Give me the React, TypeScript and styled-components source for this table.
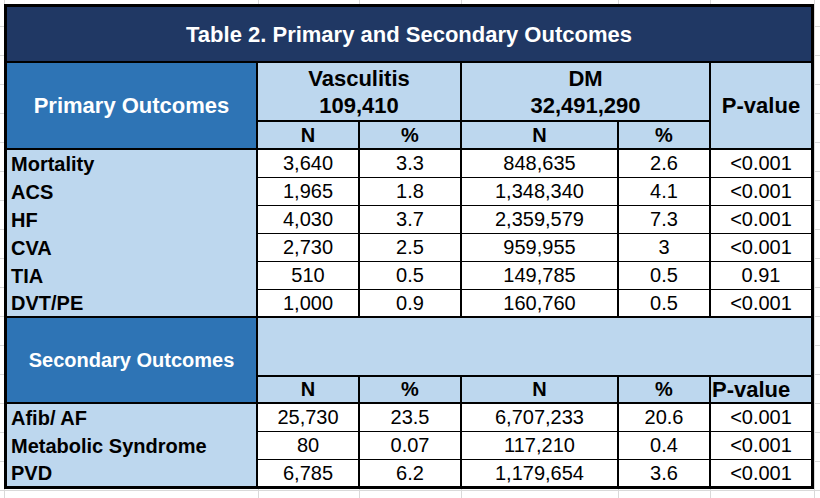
import React from "react";
import styled, { createGlobalStyle } from "styled-components";

const GlobalStyle = createGlobalStyle`
  html, body { margin: 0; padding: 0; background: #ffffff; }
  body { font-family: "Liberation Sans", Arial, Helvetica, sans-serif; }
  *, *::before, *::after { box-sizing: border-box; }
`;

const NAVY = "#203864";
const MID = "#2e74b5";
const LIGHT = "#bdd7ee";
const LINE = "#000000";
const GRID = "#d9d9d9";

const gridXs = [4, 258, 359, 461, 618, 710, 814];
const gridLayers = gridXs.map(() => `linear-gradient(${GRID}, ${GRID})`).join(", ");
const gridPos = gridXs.map((x) => `${x}px 0`).join(", ");
const gridSize = gridXs.map(() => "1px 100%").join(", ");
const gridRepeat = gridXs.map(() => "no-repeat").join(", ");

const Sheet = styled.div`
  width: 820px;
  height: 498px;
  padding: 4px 0 0 4px;
  overflow: hidden;
  background-color: #ffffff;
  background-image: ${gridLayers},
    repeating-linear-gradient(to bottom, transparent 0 28px, ${GRID} 28px 29px);
  background-position: ${gridPos}, 0 -2px;
  background-size: ${gridSize}, 100% 29px;
  background-repeat: ${gridRepeat}, repeat;
`;

const Table = styled.table`
  border-collapse: separate;
  border-spacing: 0;
  border: 3px solid ${LINE};
  table-layout: fixed;
  width: 810px;
  background: #ffffff;
  color: #000000;
`;

const Row = styled.tr<{ $h: number }>`
  height: ${(p) => p.$h}px;
`;

const baseCell = `
  padding: 0;
  vertical-align: middle;
  white-space: nowrap;
  line-height: 1.15;
`;

const TitleCell = styled.th`
  ${baseCell}
  background: ${NAVY};
  color: #ffffff;
  font-size: 22px;
  font-weight: 700;
  text-align: center;
  padding-top: 1px;
  border-bottom: 2px solid ${LINE};
`;

const SectionCell = styled.th<{ $size: number }>`
  ${baseCell}
  background: ${MID};
  color: #ffffff;
  font-size: ${(p) => p.$size}px;
  font-weight: 700;
  text-align: center;
  border-right: 2px solid ${LINE};
  border-bottom: 2px solid ${LINE};
`;

const GroupHead = styled.th<{ $last?: boolean }>`
  ${baseCell}
  background: ${LIGHT};
  font-size: 22px;
  font-weight: 700;
  line-height: 27px;
  padding-top: 1px;
  text-align: center;
  border-right: ${(p) => (p.$last ? "0" : `2px solid ${LINE}`)};
  border-bottom: 2px solid ${LINE};
`;

const SubHead = styled.th<{ $last?: boolean; $left?: boolean; $size?: number }>`
  ${baseCell}
  background: ${LIGHT};
  font-size: ${(p) => p.$size ?? 20}px;
  font-weight: 700;
  text-align: ${(p) => (p.$left ? "left" : "center")};
  padding-left: ${(p) => (p.$left ? "1px" : "0")};
  border-right: ${(p) => (p.$last ? "0" : `2px solid ${LINE}`)};
  border-bottom: 2px solid ${LINE};
`;

const BandCell = styled.td`
  ${baseCell}
  background: ${LIGHT};
  border-bottom: 2px solid ${LINE};
`;

const LabelCell = styled.th<{ $bottom: number }>`
  ${baseCell}
  background: ${LIGHT};
  font-size: 20px;
  font-weight: 700;
  text-align: left;
  padding-left: 4px;
  border-right: 2px solid ${LINE};
  border-bottom: ${(p) => (p.$bottom ? `${p.$bottom}px solid ${LINE}` : "0")};
`;

const ValueCell = styled.td<{ $last?: boolean; $bottom: number }>`
  ${baseCell}
  background: #ffffff;
  font-size: 20px;
  font-weight: 400;
  text-align: center;
  border-right: ${(p) => (p.$last ? "0" : `2px solid ${LINE}`)};
  border-bottom: ${(p) => (p.$bottom ? `${p.$bottom}px solid ${LINE}` : "0")};
`;

type DataRow = [string, string, string, string, string, string];

const primary: DataRow[] = [
  ["Mortality", "3,640", "3.3", "848,635", "2.6", "<0.001"],
  ["ACS", "1,965", "1.8", "1,348,340", "4.1", "<0.001"],
  ["HF", "4,030", "3.7", "2,359,579", "7.3", "<0.001"],
  ["CVA", "2,730", "2.5", "959,955", "3", "<0.001"],
  ["TIA", "510", "0.5", "149,785", "0.5", "0.91"],
  ["DVT/PE", "1,000", "0.9", "160,760", "0.5", "<0.001"],
];

const secondary: DataRow[] = [
  ["Afib/ AF", "25,730", "23.5", "6,707,233", "20.6", "<0.001"],
  ["Metabolic Syndrome", "80", "0.07", "117,210", "0.4", "<0.001"],
  ["PVD", "6,785", "6.2", "1,179,654", "3.6", "<0.001"],
];

const secondaryHeights = [28, 28, 26];

function DataRows({
  rows,
  heights,
  endBorder,
}: {
  rows: DataRow[];
  heights: number[];
  endBorder: number;
}) {
  return (
    <>
      {rows.map((r, i) => {
        const isEnd = i === rows.length - 1;
        const bottom = isEnd ? endBorder : 1;
        return (
          <Row key={r[0]} $h={heights[i]}>
            <LabelCell scope="row" $bottom={isEnd ? endBorder : 0}>
              {r[0]}
            </LabelCell>
            {r.slice(1).map((v, j) => (
              <ValueCell key={j} $bottom={bottom} $last={j === 4}>
                {v}
              </ValueCell>
            ))}
          </Row>
        );
      })}
    </>
  );
}

export default function App() {
  return (
    <>
      <GlobalStyle />
      <Sheet>
        <Table>
          <colgroup>
            <col style={{ width: 251 }} />
            <col style={{ width: 102 }} />
            <col style={{ width: 102 }} />
            <col style={{ width: 157 }} />
            <col style={{ width: 92 }} />
            <col style={{ width: 100 }} />
          </colgroup>
          <thead>
            <Row $h={56}>
              <TitleCell colSpan={6}>Table 2. Primary and Secondary Outcomes</TitleCell>
            </Row>
          </thead>
          <tbody>
            <Row $h={59}>
              <SectionCell rowSpan={2} $size={22}>
                Primary Outcomes
              </SectionCell>
              <GroupHead colSpan={2}>
                Vasculitis
                <br />
                109,410
              </GroupHead>
              <GroupHead colSpan={2}>
                DM
                <br />
                32,491,290
              </GroupHead>
              <SubHead rowSpan={2} $last $size={22}>
                P-value
              </SubHead>
            </Row>
            <Row $h={28}>
              <SubHead>N</SubHead>
              <SubHead>%</SubHead>
              <SubHead>N</SubHead>
              <SubHead>%</SubHead>
            </Row>
            <DataRows rows={primary} heights={[28, 28, 28, 28, 28, 28]} endBorder={2} />
            <Row $h={59}>
              <SectionCell rowSpan={2} $size={20}>
                Secondary Outcomes
              </SectionCell>
              <BandCell colSpan={5} />
            </Row>
            <Row $h={27}>
              <SubHead>N</SubHead>
              <SubHead>%</SubHead>
              <SubHead>N</SubHead>
              <SubHead>%</SubHead>
              <SubHead $last $left $size={22}>
                P-value
              </SubHead>
            </Row>
            <DataRows rows={secondary} heights={secondaryHeights} endBorder={0} />
          </tbody>
        </Table>
      </Sheet>
    </>
  );
}
